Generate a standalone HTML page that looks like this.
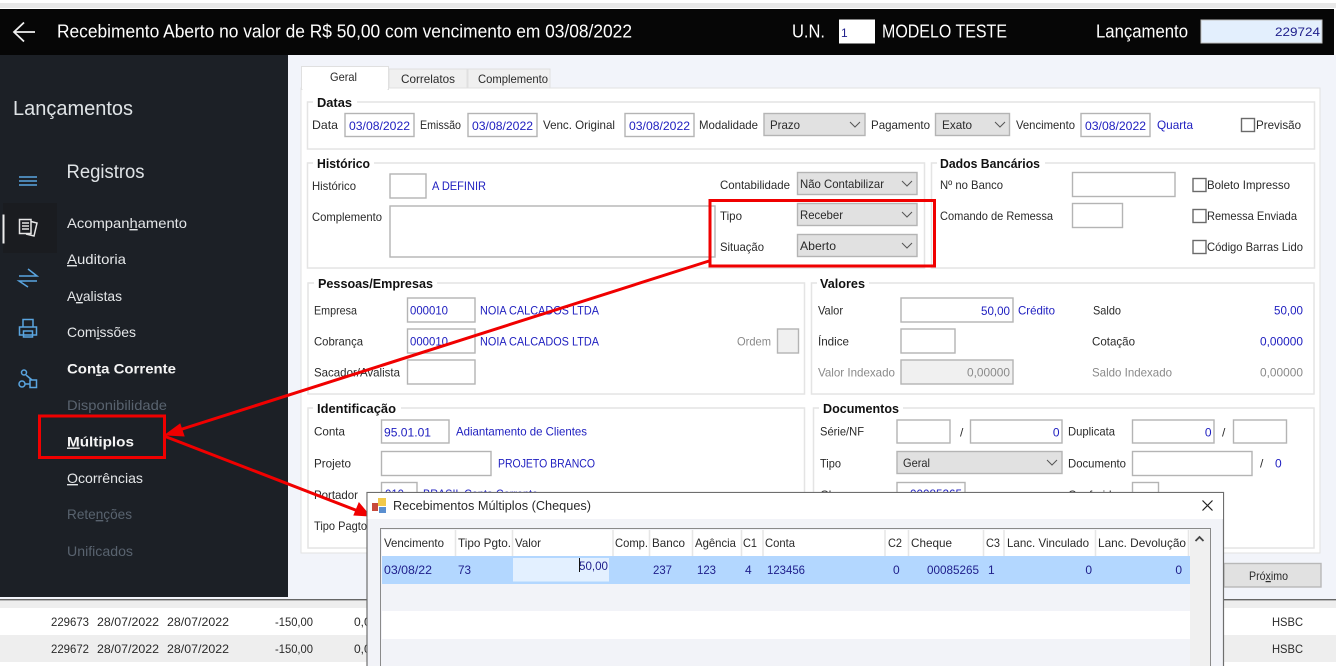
<!DOCTYPE html>
<html lang="pt"><head><meta charset="utf-8"><title>Recebimento</title>
<style>
html,body{margin:0;padding:0;background:#fff;width:1336px;height:666px;overflow:hidden}
svg{display:block;position:absolute;left:0;top:0}
text{font-family:"Liberation Sans",sans-serif;font-size:12px;fill:#2a2a2a;white-space:pre}
.b{fill:#2020c0}.n{fill:#20208c}.g{fill:#8a8a8a}
.h{font-weight:bold;fill:#111;font-size:12.5px}
.w{fill:#fff;font-size:18px}
.m{fill:#e4e6e8;font-size:14px}.md{fill:#59636f;font-size:14px}.mb{fill:#f4f4f4;font-size:14px;font-weight:bold}
.gb{fill:#fff;stroke:#e4e4e4;stroke-width:1.5}
.i{fill:#fff;stroke:#b4b4b4;stroke-width:1.4}
.c{fill:#e1e1e1;stroke:#b4b4b4;stroke-width:1.4}
.d{fill:#f0f0f0;stroke:#b4b4b4;stroke-width:1.4}
.ck{fill:#fff;stroke:#6a6a6a;stroke-width:1.4}
.ch{fill:none;stroke:#555;stroke-width:1}
.ic{fill:none;stroke:#5aa5e0;stroke-width:1.5}
.sep{stroke:#e6e6e6;stroke-width:1.5}
u{text-decoration:underline}
</style></head><body>
<svg width="1336" height="666" viewBox="0 0 1336 666" xmlns="http://www.w3.org/2000/svg">
<!-- base -->
<rect width="1336" height="666" fill="#fff"/>
<rect x="0" y="3" width="1336" height="5" fill="#e8e8e8"/>
<rect x="0" y="55" width="1336" height="545" fill="#f2f4fa"/>
<!-- header -->
<rect x="0" y="9" width="1334" height="46" fill="#060606"/>
<path d="M14 32H35M24 22.5L14 32L24 41.5" fill="none" stroke="#f0f0f0" stroke-width="1.8"/>
<text class="w" x="57" y="37.500" textLength="575" lengthAdjust="spacingAndGlyphs">Recebimento Aberto no valor de R$ 50,00 com vencimento em 03/08/2022</text>
<text class="w" x="792" y="37.500" textLength="33" lengthAdjust="spacingAndGlyphs">U.N.</text>
<rect x="839" y="19.500" width="36" height="24" fill="#fff"/>
<text class="n" x="841" y="37" font-size="12">1</text>
<text class="w" x="882" y="37.500" textLength="125" lengthAdjust="spacingAndGlyphs">MODELO TESTE</text>
<text class="w" x="1096" y="37.500" textLength="92" lengthAdjust="spacingAndGlyphs">Lançamento</text>
<rect x="1201" y="20" width="121" height="23" fill="#e3effd" stroke="#c0c0c0"/>
<text class="n" x="1320" y="36" text-anchor="end" textLength="45" lengthAdjust="spacingAndGlyphs">229724</text>
<!-- sidebar -->
<rect x="0" y="55" width="288" height="542" fill="#1c2026"/>
<text x="13" y="115" style="font-size:20px;fill:#dfe3e6" textLength="120" lengthAdjust="spacingAndGlyphs">Lançamentos</text>
<text x="66.500" y="178" style="font-size:19px;fill:#dfe3e6" textLength="78" lengthAdjust="spacingAndGlyphs">Registros</text>
<path class="ic" d="M19 177H37M19 181H37M19 185H37" stroke-width="1.2"/>
<rect x="3" y="203" width="54" height="50" fill="#1a1c20"/>
<rect x="2.500" y="214.500" width="2" height="29" fill="#eee"/>
<path d="M19.500 219.500H31V233.500H19.500ZM22 223H29M22 226H29M22 229H29M31 221.500L37 223L34 236L26 234" fill="none" stroke="#e6e6e6" stroke-width="1.5"/>
<path class="ic" d="M19 276H37L28 269M37 281H19L28 287"/>
<path class="ic" d="M23 327V319.500H33V327M19.500 327H36.500V335H19.500ZM23.500 331H32.500V337H23.500Z"/>
<circle class="ic" cx="24" cy="372.500" r="2.500"/><circle class="ic" cx="22" cy="384" r="3"/>
<path class="ic" d="M26 375L32 380M25 384H30M30 380H36.500V387.500H30Z"/>
<text class="m" x="67" y="228" textLength="120" lengthAdjust="spacingAndGlyphs">Acompan<tspan text-decoration="underline">h</tspan>amento</text>
<text class="m" x="67" y="264" textLength="59" lengthAdjust="spacingAndGlyphs"><tspan text-decoration="underline">A</tspan>uditoria</text>
<text class="m" x="67" y="301" textLength="55" lengthAdjust="spacingAndGlyphs">A<tspan text-decoration="underline">v</tspan>alistas</text>
<text class="m" x="67" y="337" textLength="69" lengthAdjust="spacingAndGlyphs">Com<tspan text-decoration="underline">i</tspan>ssões</text>
<text class="mb" x="67" y="373.500" textLength="109" lengthAdjust="spacingAndGlyphs">Con<tspan text-decoration="underline">t</tspan>a Corrente</text>
<text class="md" x="67" y="410" textLength="100" lengthAdjust="spacingAndGlyphs">Disponibilidade</text>
<text class="mb" x="67" y="446.500" textLength="67" lengthAdjust="spacingAndGlyphs"><tspan text-decoration="underline">M</tspan>últiplos</text>
<text class="m" x="67" y="483" textLength="76" lengthAdjust="spacingAndGlyphs"><tspan text-decoration="underline">O</tspan>corrências</text>
<text class="md" x="67" y="519" textLength="65" lengthAdjust="spacingAndGlyphs">Rete<tspan text-decoration="underline">n</tspan>ções</text>
<text class="md" x="67" y="556" textLength="66" lengthAdjust="spacingAndGlyphs">Unificados</text>
<!-- tabs/panel -->
<rect x="301" y="88" width="1019" height="465" fill="#fff" stroke="#e2e2e2"/>
<rect x="389" y="69" width="78" height="19" fill="#f0f0f0" stroke="#e0e0e0"/>
<rect x="468" y="69" width="82" height="19" fill="#f0f0f0" stroke="#e0e0e0"/>
<rect x="301.500" y="66.500" width="87" height="23" fill="#fff" stroke="#e0e0e0"/>
<rect x="302.500" y="86" width="85" height="5" fill="#fff"/>
<text x="330" y="81" textLength="27" lengthAdjust="spacingAndGlyphs">Geral</text>
<text x="401" y="83" textLength="54" lengthAdjust="spacingAndGlyphs">Correlatos</text>
<text x="478" y="83" textLength="70" lengthAdjust="spacingAndGlyphs">Complemento</text>
<!-- Datas -->
<rect class="gb" x="307.500" y="102" width="1007" height="47"/>
<rect x="313" y="98" width="44" height="10" fill="#fff"/>
<text class="h" x="317" y="107" textLength="35" lengthAdjust="spacingAndGlyphs">Datas</text>
<text x="312" y="129" textLength="26" lengthAdjust="spacingAndGlyphs">Data</text>
<rect class="i" x="345" y="113.500" width="69" height="23"/><text class="b" x="349" y="130" textLength="61" lengthAdjust="spacingAndGlyphs">03/08/2022</text>
<text x="420" y="129" textLength="41" lengthAdjust="spacingAndGlyphs">Emissão</text>
<rect class="i" x="468" y="113.500" width="69" height="23"/><text class="b" x="472" y="130" textLength="61" lengthAdjust="spacingAndGlyphs">03/08/2022</text>
<text x="543" y="129" textLength="72" lengthAdjust="spacingAndGlyphs">Venc. Original</text>
<rect class="i" x="625" y="113.500" width="69" height="23"/><text class="b" x="629" y="130" textLength="61" lengthAdjust="spacingAndGlyphs">03/08/2022</text>
<text x="699" y="129" textLength="59" lengthAdjust="spacingAndGlyphs">Modalidade</text>
<rect class="c" x="764" y="113.500" width="101" height="22"/><text x="770" y="129" textLength="30" lengthAdjust="spacingAndGlyphs">Prazo</text>
<path class="ch" d="M850 122L855 127L860 122"/>
<text x="871" y="129" textLength="59" lengthAdjust="spacingAndGlyphs">Pagamento</text>
<rect class="c" x="935.500" y="113.500" width="74" height="22"/><text x="942" y="129" textLength="30" lengthAdjust="spacingAndGlyphs">Exato</text>
<path class="ch" d="M995 122L1000 127L1005 122"/>
<text x="1016" y="129" textLength="59" lengthAdjust="spacingAndGlyphs">Vencimento</text>
<rect class="i" x="1081" y="113.500" width="69" height="23"/><text class="b" x="1085" y="130" textLength="61" lengthAdjust="spacingAndGlyphs">03/08/2022</text>
<text class="b" x="1157" y="129" textLength="36" lengthAdjust="spacingAndGlyphs">Quarta</text>
<rect class="ck" x="1241.500" y="118.500" width="13" height="13"/><text x="1256" y="129" textLength="45" lengthAdjust="spacingAndGlyphs">Previsão</text>
<!-- Historico -->
<rect class="gb" x="307.500" y="163" width="617" height="105"/>
<rect x="313" y="158" width="61" height="10" fill="#fff"/>
<text class="h" x="317" y="168" textLength="53" lengthAdjust="spacingAndGlyphs">Histórico</text>
<text x="312" y="190" textLength="44" lengthAdjust="spacingAndGlyphs">Histórico</text>
<rect class="i" x="390" y="174" width="36" height="24"/>
<text class="b" x="432" y="190" textLength="54" lengthAdjust="spacingAndGlyphs">A DEFINIR</text>
<text x="312" y="221" textLength="70" lengthAdjust="spacingAndGlyphs">Complemento</text>
<rect class="i" x="390" y="206" width="325" height="51"/>
<text x="720" y="189" textLength="70" lengthAdjust="spacingAndGlyphs">Contabilidade</text>
<rect class="c" x="797.500" y="172.500" width="119.500" height="22"/><text x="800" y="188" textLength="84" lengthAdjust="spacingAndGlyphs">Não Contabilizar</text>
<path class="ch" d="M902 181L907 186L912 181"/>
<text x="720" y="220" textLength="22" lengthAdjust="spacingAndGlyphs">Tipo</text>
<rect class="c" x="797.500" y="203.500" width="119.500" height="22"/><text x="800" y="219" textLength="43" lengthAdjust="spacingAndGlyphs">Receber</text>
<path class="ch" d="M902 212L907 217L912 212"/>
<text x="720" y="251" textLength="44" lengthAdjust="spacingAndGlyphs">Situação</text>
<rect class="c" x="797.500" y="234.500" width="119.500" height="22"/><text x="800" y="250" textLength="36" lengthAdjust="spacingAndGlyphs">Aberto</text>
<path class="ch" d="M902 243L907 248L912 243"/>
<!-- Dados bancarios -->
<rect class="gb" x="931.500" y="163" width="383" height="105"/>
<rect x="937" y="158" width="108" height="10" fill="#fff"/>
<text class="h" x="940" y="168" textLength="100" lengthAdjust="spacingAndGlyphs">Dados Bancários</text>
<text x="940" y="189" textLength="63" lengthAdjust="spacingAndGlyphs">Nº no Banco</text>
<rect class="i" x="1072.500" y="172.500" width="102.500" height="24"/>
<text x="940" y="220" textLength="113" lengthAdjust="spacingAndGlyphs">Comando de Remessa</text>
<rect class="i" x="1072.500" y="203.500" width="50" height="24"/>
<rect class="ck" x="1193" y="178.500" width="13" height="13"/><text x="1207" y="189" textLength="83" lengthAdjust="spacingAndGlyphs">Boleto Impresso</text>
<rect class="ck" x="1193" y="209.500" width="13" height="13"/><text x="1207" y="220" textLength="90" lengthAdjust="spacingAndGlyphs">Remessa Enviada</text>
<rect class="ck" x="1193" y="240.500" width="13" height="13"/><text x="1207" y="251" textLength="96" lengthAdjust="spacingAndGlyphs">Código Barras Lido</text>
<!-- Pessoas -->
<rect class="gb" x="308" y="283" width="496.500" height="111"/>
<rect x="314" y="278" width="123" height="10" fill="#fff"/>
<text class="h" x="318" y="288" textLength="115" lengthAdjust="spacingAndGlyphs">Pessoas/Empresas</text>
<text x="314" y="314.500" textLength="43" lengthAdjust="spacingAndGlyphs">Empresa</text>
<rect class="i" x="407.500" y="298" width="67.500" height="24"/><text class="b" x="410" y="314.500" textLength="38" lengthAdjust="spacingAndGlyphs">000010</text>
<text class="b" x="480" y="314.500" textLength="119" lengthAdjust="spacingAndGlyphs">NOIA CALCADOS LTDA</text>
<text x="314" y="345.500" textLength="49" lengthAdjust="spacingAndGlyphs">Cobrança</text>
<rect class="i" x="407.500" y="329" width="67.500" height="24"/><text class="b" x="410" y="345.500" textLength="38" lengthAdjust="spacingAndGlyphs">000010</text>
<text class="b" x="480" y="345.500" textLength="119" lengthAdjust="spacingAndGlyphs">NOIA CALCADOS LTDA</text>
<text class="g" x="737" y="345.500" textLength="34" lengthAdjust="spacingAndGlyphs">Ordem</text>
<rect class="d" x="777.500" y="329" width="21" height="24"/>
<text x="314" y="376.500" textLength="86" lengthAdjust="spacingAndGlyphs">Sacador/Avalista</text>
<rect class="i" x="407.500" y="360" width="67.500" height="24"/>
<!-- Valores -->
<rect class="gb" x="811.500" y="283" width="502.500" height="111"/>
<rect x="817" y="278" width="52" height="10" fill="#fff"/>
<text class="h" x="820" y="288" textLength="45" lengthAdjust="spacingAndGlyphs">Valores</text>
<text x="818" y="314.500" textLength="25" lengthAdjust="spacingAndGlyphs">Valor</text>
<rect class="i" x="901" y="298" width="112" height="24"/><text class="b" x="1010" y="315" text-anchor="end" textLength="29" lengthAdjust="spacingAndGlyphs">50,00</text>
<text class="b" x="1018" y="314.500" textLength="37" lengthAdjust="spacingAndGlyphs">Crédito</text>
<text x="1093" y="314.500" textLength="28" lengthAdjust="spacingAndGlyphs">Saldo</text>
<text class="b" x="1303" y="314.500" text-anchor="end" textLength="29" lengthAdjust="spacingAndGlyphs">50,00</text>
<text x="818" y="345.500" textLength="31" lengthAdjust="spacingAndGlyphs">Índice</text>
<rect class="i" x="901" y="329" width="54" height="24"/>
<text x="1092" y="345.500" textLength="43" lengthAdjust="spacingAndGlyphs">Cotação</text>
<text class="b" x="1303" y="345.500" text-anchor="end" textLength="43" lengthAdjust="spacingAndGlyphs">0,00000</text>
<text class="g" x="818" y="376.500" textLength="77" lengthAdjust="spacingAndGlyphs">Valor Indexado</text>
<rect class="d" x="901" y="360" width="112" height="24"/><text class="g" x="1010" y="376.500" text-anchor="end" textLength="43" lengthAdjust="spacingAndGlyphs">0,00000</text>
<text class="g" x="1092" y="376.500" textLength="80" lengthAdjust="spacingAndGlyphs">Saldo Indexado</text>
<text class="g" x="1303" y="376.500" text-anchor="end" textLength="43" lengthAdjust="spacingAndGlyphs">0,00000</text>
<!-- Identificacao -->
<rect class="gb" x="308" y="408" width="496.500" height="140"/>
<rect x="313" y="403" width="88" height="10" fill="#fff"/>
<text class="h" x="317" y="413" textLength="79" lengthAdjust="spacingAndGlyphs">Identificação</text>
<text x="314" y="435.500" textLength="31" lengthAdjust="spacingAndGlyphs">Conta</text>
<rect class="i" x="381.500" y="420" width="67.500" height="23"/><text class="b" x="384" y="436.500" textLength="47" lengthAdjust="spacingAndGlyphs">95.01.01</text>
<text class="b" x="456" y="435.500" textLength="131" lengthAdjust="spacingAndGlyphs">Adiantamento de Clientes</text>
<text x="314" y="467.500" textLength="37" lengthAdjust="spacingAndGlyphs">Projeto</text>
<rect class="i" x="381.500" y="451.500" width="109.500" height="24"/>
<text class="b" x="498" y="467.500" textLength="97" lengthAdjust="spacingAndGlyphs">PROJETO BRANCO</text>
<text x="314" y="499" textLength="44" lengthAdjust="spacingAndGlyphs">Portador</text>
<rect class="i" x="381.500" y="482.500" width="35.500" height="24"/><text class="b" x="385" y="498" textLength="19" lengthAdjust="spacingAndGlyphs">010</text>
<text class="b" x="423" y="498" textLength="115" lengthAdjust="spacingAndGlyphs">BRASIL Conta Corrente</text>
<text x="314" y="530" textLength="53" lengthAdjust="spacingAndGlyphs">Tipo Pagto</text>
<!-- Documentos -->
<rect class="gb" x="813.500" y="408" width="500.500" height="140"/>
<rect x="819" y="403" width="84" height="10" fill="#fff"/>
<text class="h" x="823" y="413" textLength="76" lengthAdjust="spacingAndGlyphs">Documentos</text>
<text x="820" y="435.500" textLength="44" lengthAdjust="spacingAndGlyphs">Série/NF</text>
<rect class="i" x="897" y="420" width="53" height="23"/>
<text x="960" y="436.500">/</text>
<rect class="i" x="970.500" y="420" width="91.500" height="23"/><text class="b" x="1059.500" y="436.500" text-anchor="end">0</text>
<text x="1068" y="435.500" textLength="47" lengthAdjust="spacingAndGlyphs">Duplicata</text>
<rect class="i" x="1132.500" y="420" width="81.500" height="23"/><text class="b" x="1211.500" y="436.500" text-anchor="end">0</text>
<text x="1222" y="436.500">/</text>
<rect class="i" x="1233.500" y="420" width="53" height="23"/>
<text x="820" y="467.500" textLength="21" lengthAdjust="spacingAndGlyphs">Tipo</text>
<rect class="c" x="897" y="451.500" width="165" height="22"/><text x="903" y="467" textLength="27" lengthAdjust="spacingAndGlyphs">Geral</text>
<path class="ch" d="M1047 460L1052 465L1057 460"/>
<text x="1068" y="467.500" textLength="58" lengthAdjust="spacingAndGlyphs">Documento</text>
<rect class="i" x="1132.500" y="451.500" width="119.500" height="24"/>
<text x="1260" y="467.500">/</text><text class="b" x="1275" y="467.500">0</text>
<text x="820" y="499">Cheque</text>
<rect class="i" x="897" y="482.500" width="68" height="24"/><text class="b" x="962" y="498" text-anchor="end" textLength="52" lengthAdjust="spacingAndGlyphs">00085265</text>
<text x="1068" y="499" textLength="50" lengthAdjust="spacingAndGlyphs">Conferido</text>
<rect class="i" x="1132.500" y="482.500" width="26" height="24"/>
<!-- red marks -->
<rect x="710" y="200.500" width="224.500" height="65.500" fill="none" stroke="#f00000" stroke-width="3"/>
<!-- bottom grid -->
<rect x="0" y="597" width="1336" height="3" fill="#f2f4fa"/>
<rect x="0" y="599" width="1336" height="1.400" fill="#666"/>
<rect x="0" y="600.500" width="1336" height="7.500" fill="#eeeeee"/>
<rect x="0" y="608" width="1336" height="27" fill="#fff"/>
<rect x="0" y="635" width="1336" height="27" fill="#eeeeee"/>
<rect x="0" y="662" width="1336" height="4" fill="#fff"/>
<g>
<text x="51" y="626" textLength="38" lengthAdjust="spacingAndGlyphs">229673</text><text x="97" y="626" textLength="62" lengthAdjust="spacingAndGlyphs">28/07/2022</text><text x="167" y="626" textLength="62" lengthAdjust="spacingAndGlyphs">28/07/2022</text><text x="275" y="626" textLength="38" lengthAdjust="spacingAndGlyphs">-150,00</text><text x="354" y="626">0,0</text><text x="1272" y="626" textLength="31" lengthAdjust="spacingAndGlyphs">HSBC</text>
<text x="51" y="653" textLength="38" lengthAdjust="spacingAndGlyphs">229672</text><text x="97" y="653" textLength="62" lengthAdjust="spacingAndGlyphs">28/07/2022</text><text x="167" y="653" textLength="62" lengthAdjust="spacingAndGlyphs">28/07/2022</text><text x="275" y="653" textLength="38" lengthAdjust="spacingAndGlyphs">-150,00</text><text x="354" y="653">0,0</text><text x="1272" y="653" textLength="31" lengthAdjust="spacingAndGlyphs">HSBC</text>
</g>
<!-- Proximo -->
<rect x="1224" y="563.500" width="97" height="23.500" fill="#e1e1e1" stroke="#b8b8b8" stroke-width="1.400"/>
<text x="1249" y="580" textLength="39" lengthAdjust="spacingAndGlyphs">Pró<tspan text-decoration="underline">x</tspan>imo</text>
<!-- arrow 1 + box -->
<path d="M709 261L176 431" stroke="#f00000" stroke-width="3" fill="none"/>
<path d="M165 435L180 424L184 436Z" fill="#f00000" stroke="#f00000"/>
<path d="M164 436L358 511" stroke="#f00000" stroke-width="3" fill="none"/>
<path d="M370 516L354 515L359 503Z" fill="#f00000" stroke="#f00000"/>
<rect x="39.500" y="416" width="125" height="41.500" fill="none" stroke="#f00000" stroke-width="3"/>
<!-- dialog -->
<rect x="367" y="492.500" width="856.500" height="175" fill="#f2f3f8" stroke="#6e6e6e" stroke-width="1.200"/>
<rect x="367.600" y="493" width="855.400" height="26" fill="#fff"/>
<rect x="372" y="503" width="6" height="8" fill="#c84a3c"/><rect x="378" y="498" width="8" height="8" fill="#f1c84a"/><rect x="379" y="507" width="7" height="6" fill="#5a8fd0"/>
<text x="393" y="510" style="font-size:13px" textLength="198" lengthAdjust="spacingAndGlyphs">Recebimentos Múltiplos (Cheques)</text>
<path d="M1202.500 500.500L1212.500 510.500M1212.500 500.500L1202.500 510.500" stroke="#222" stroke-width="1.200" fill="none"/>
<!-- grid -->
<rect x="380.500" y="528.500" width="830" height="140" fill="#f2f3f8" stroke="#8a8a8a"/>
<rect x="382" y="530" width="808" height="26" fill="#fff"/>
<rect x="382" y="556" width="808" height="28" fill="#b3d7ff"/>
<rect x="382" y="584" width="808" height="27" fill="#f2f3f8"/>
<rect x="382" y="611" width="808" height="28" fill="#fff"/>
<rect x="382" y="639" width="808" height="27" fill="#f2f3f8"/>
<rect x="1190" y="529.500" width="20" height="137" fill="#f0f0f0"/>
<path d="M1195.500 541L1199.500 537L1203.500 541" fill="none" stroke="#444" stroke-width="1.800"/>
<path class="sep" d="M455.500 530V556M512.500 530V556M613 530V556M649.500 530V556M692.500 530V556M741.500 530V556M763 530V556M885 530V556M908.500 530V556M983.500 530V556M1004 530V556M1095.500 530V556M1188.500 530V556"/>
<text x="384" y="547" textLength="60" lengthAdjust="spacingAndGlyphs">Vencimento</text>
<text x="458" y="547" textLength="53" lengthAdjust="spacingAndGlyphs">Tipo Pgto.</text>
<text x="515" y="547" textLength="26" lengthAdjust="spacingAndGlyphs">Valor</text>
<text x="615" y="547" textLength="33" lengthAdjust="spacingAndGlyphs">Comp.</text>
<text x="652" y="547" textLength="33" lengthAdjust="spacingAndGlyphs">Banco</text>
<text x="695" y="547" textLength="41" lengthAdjust="spacingAndGlyphs">Agência</text>
<text x="743" y="547" textLength="14" lengthAdjust="spacingAndGlyphs">C1</text>
<text x="765" y="547" textLength="30" lengthAdjust="spacingAndGlyphs">Conta</text>
<text x="888" y="547" textLength="14" lengthAdjust="spacingAndGlyphs">C2</text>
<text x="911" y="547" textLength="41" lengthAdjust="spacingAndGlyphs">Cheque</text>
<text x="986" y="547" textLength="14" lengthAdjust="spacingAndGlyphs">C3</text>
<text x="1007" y="547" textLength="82" lengthAdjust="spacingAndGlyphs">Lanc. Vinculado</text>
<text x="1098" y="547" textLength="88" lengthAdjust="spacingAndGlyphs">Lanc. Devolução</text>
<rect x="513" y="558" width="96" height="23.500" fill="#e3f0ff"/>
<text class="n" x="384" y="574" textLength="48" lengthAdjust="spacingAndGlyphs">03/08/22</text>
<text class="n" x="458" y="574" textLength="13" lengthAdjust="spacingAndGlyphs">73</text>
<text class="n" x="608" y="570" text-anchor="end" textLength="29" lengthAdjust="spacingAndGlyphs">50,00</text>
<rect x="579" y="558" width="1" height="14" fill="#111"/>
<text class="n" x="653" y="574" textLength="19" lengthAdjust="spacingAndGlyphs">237</text>
<text class="n" x="697" y="574" textLength="19" lengthAdjust="spacingAndGlyphs">123</text>
<text class="n" x="745" y="574">4</text>
<text class="n" x="767" y="574" textLength="38" lengthAdjust="spacingAndGlyphs">123456</text>
<text class="n" x="893" y="574">0</text>
<text class="n" x="927" y="574" textLength="52" lengthAdjust="spacingAndGlyphs">00085265</text>
<text class="n" x="988" y="574">1</text>
<text class="n" x="1092" y="574" text-anchor="end">0</text>
<text class="n" x="1182" y="574" text-anchor="end">0</text>
</svg>
</body></html>
